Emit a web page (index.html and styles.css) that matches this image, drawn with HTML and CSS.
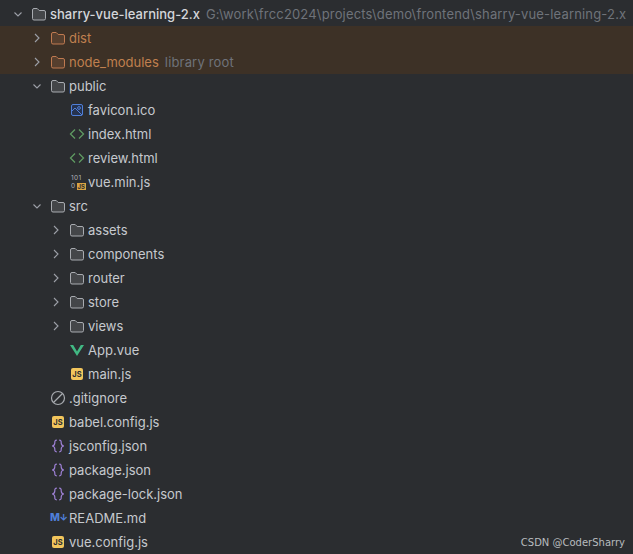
FILE: index.html
```html
<!DOCTYPE html>
<html lang="en">
<head>
<meta charset="utf-8">
<title>Project tree</title>
<link rel="stylesheet" href="styles.css">
</head>
<body>
<svg class="defs" width="0" height="0" aria-hidden="true">
  <symbol id="folder" viewBox="0 0 16 16"><path d="M1.5 4A1.5 1.5 0 0 1 3 2.5h3.2l2 2H13A1.5 1.5 0 0 1 14.5 6v6.5A1.5 1.5 0 0 1 13 14H3a1.5 1.5 0 0 1-1.5-1.5z" fill="currentColor" fill-opacity=".2" stroke="currentColor"/></symbol>
  <symbol id="open" viewBox="0 0 12 12"><path d="M2.500 4.500L6 8l3.500-3.500" fill="none" stroke="currentColor" stroke-width="1.100"/></symbol>
  <symbol id="closed" viewBox="0 0 12 12"><path d="M4 2l4 4-4 4" fill="none" stroke="currentColor" stroke-width="1.100"/></symbol>
  <symbol id="html" viewBox="0 0 16 16"><path d="M6 3.500L1.500 8 6 12.500M10 3.500L14.500 8 10 12.500" fill="none" stroke="#5f9a62" stroke-width="1.300"/></symbol>
  <symbol id="json" viewBox="0 0 16 16"><path d="M6.800 2.200C4.600 2.200 4.800 3.700 4.800 5c0 1.700-.6 2.600-2.600 3 2 .4 2.600 1.300 2.600 3 0 1.300-.2 2.800 2 2.800M9.200 2.200c2.200 0 2 1.500 2 2.800 0 1.700.6 2.600 2.600 3-2 .4-2.600 1.300-2.600 3 0 1.300.2 2.800-2 2.800" fill="none" stroke="#9d80d4" stroke-width="1.200"/></symbol>
</svg>

<main class="tree">
  <div class="row d0"><svg class="chev"><use href="#open"/></svg><svg class="icon"><use href="#folder"/></svg><span class="name strong">sharry-vue-learning-2.x</span><span class="hint">G:\work\frcc2024\projects\demo\frontend\sharry-vue-learning-2.x</span></div>
  <div class="row d1 excluded"><svg class="chev"><use href="#closed"/></svg><svg class="icon"><use href="#folder"/></svg><span class="name">dist</span></div>
  <div class="row d1 excluded"><svg class="chev"><use href="#closed"/></svg><svg class="icon"><use href="#folder"/></svg><span class="name">node_modules</span><span class="hint">library root</span></div>
  <div class="row d1"><svg class="chev"><use href="#open"/></svg><svg class="icon"><use href="#folder"/></svg><span class="name">public</span></div>
  <div class="row d2"><span class="chev"></span><svg class="icon" viewBox="0 0 16 16"><rect x="2.500" y="2.500" width="11" height="11" rx="1.500" fill="#26334f" stroke="#4f7fd8"/><circle cx="10" cy="6" r="1.400" fill="none" stroke="#4f7fd8"/><path d="M3 9l3-3 7 7" fill="none" stroke="#4f7fd8"/></svg><span class="name">favicon.ico</span></div>
  <div class="row d2"><span class="chev"></span><svg class="icon"><use href="#html"/></svg><span class="name">index.html</span></div>
  <div class="row d2"><span class="chev"></span><svg class="icon"><use href="#html"/></svg><span class="name">review.html</span></div>
  <div class="row d2"><span class="chev"></span><span class="icon minjs"><span class="bits">101</span><span class="bits-row"><span class="bits">0</span><span class="jsbadge">JS</span></span></span><span class="name">vue.min.js</span></div>
  <div class="row d1"><svg class="chev"><use href="#open"/></svg><svg class="icon"><use href="#folder"/></svg><span class="name">src</span></div>
  <div class="row d2"><svg class="chev"><use href="#closed"/></svg><svg class="icon"><use href="#folder"/></svg><span class="name">assets</span></div>
  <div class="row d2"><svg class="chev"><use href="#closed"/></svg><svg class="icon"><use href="#folder"/></svg><span class="name">components</span></div>
  <div class="row d2"><svg class="chev"><use href="#closed"/></svg><svg class="icon"><use href="#folder"/></svg><span class="name">router</span></div>
  <div class="row d2"><svg class="chev"><use href="#closed"/></svg><svg class="icon"><use href="#folder"/></svg><span class="name">store</span></div>
  <div class="row d2"><svg class="chev"><use href="#closed"/></svg><svg class="icon"><use href="#folder"/></svg><span class="name">views</span></div>
  <div class="row d2"><span class="chev"></span><svg class="icon" viewBox="0 0 16 16"><path d="M1 3h3.200L8 9.400 11.800 3H15L8 14z" fill="#41b883"/></svg><span class="name">App.vue</span></div>
  <div class="row d2"><span class="chev"></span><span class="icon jsicon"><span class="jstile">JS</span></span><span class="name">main.js</span></div>
  <div class="row d1"><span class="chev"></span><svg class="icon" viewBox="0 0 16 16"><circle cx="8" cy="8" r="6.500" fill="none" stroke="#a8abb0" stroke-width="1.200"/><path d="M3.500 12.500l9-9" stroke="#a8abb0" stroke-width="1.200"/></svg><span class="name">.gitignore</span></div>
  <div class="row d1"><span class="chev"></span><span class="icon jsicon"><span class="jstile">JS</span></span><span class="name">babel.config.js</span></div>
  <div class="row d1"><span class="chev"></span><svg class="icon"><use href="#json"/></svg><span class="name">jsconfig.json</span></div>
  <div class="row d1"><span class="chev"></span><svg class="icon"><use href="#json"/></svg><span class="name">package.json</span></div>
  <div class="row d1"><span class="chev"></span><svg class="icon"><use href="#json"/></svg><span class="name">package-lock.json</span></div>
  <div class="row d1"><span class="chev"></span><span class="icon md">M<span class="arrow">↓</span></span><span class="name">README.md</span></div>
  <div class="row d1"><span class="chev"></span><span class="icon jsicon"><span class="jstile">JS</span></span><span class="name">vue.config.js</span></div>
</main>
<div class="watermark">CSDN @CoderSharry</div>
</body>
</html>
```
FILE: styles.css
```css
html, body {
  margin: 0;
  height: 100%;
  overflow: hidden;
  background: #2b2d30;
}
.defs { position: absolute; }
.tree {
  padding-top: 2px;
  font: 13px/24px Inter, "Noto Sans", sans-serif;
  color: #c6c9ce;
}
.row {
  display: flex;
  align-items: center;
  height: 24px;
  white-space: nowrap;
  color: #b3b6bb;
}
.d0 { padding-left: 12px; }
.d1 { padding-left: 31px; }
.d2 { padding-left: 50px; }
.chev {
  flex: none;
  width: 12px;
  height: 12px;
  margin-right: 7px;
  color: #9da0a8;
}
.icon {
  flex: none;
  width: 16px;
  height: 16px;
  margin-right: 3px;
  color: #a8abb0;
}
.name { color: #c6c9ce; }
.strong { font-weight: 500; color: #d4d6da; }
.hint { margin-left: 6px; color: #6f737a; letter-spacing: 0.17px; }
.excluded { background: #3d3126; }
.excluded .name { color: #c0804f; }
.excluded .icon { color: #c07a50; }
.jsicon {
  display: flex;
  align-items: center;
  justify-content: center;
}
.jstile {
  width: 12px;
  height: 12px;
  border-radius: 2px;
  background: #f2c55c;
  color: #2b2d30;
  font-size: 7.500px;
  line-height: 13px;
  font-weight: 700;
  text-align: center;
}
.minjs {
  display: flex;
  flex-direction: column;
  padding-left: 2px;
  box-sizing: border-box;
  font-size: 6.500px;
  line-height: 8px;
  letter-spacing: 0.4px;
  color: #b0b3b8;
}
.bits-row { display: flex; gap: 1px; align-items: center; }
.jsbadge {
  background: #d9a343;
  color: #2b2d30;
  font-size: 6px;
  line-height: 7px;
  padding: 0 1px;
  font-weight: 700;
  letter-spacing: 0;
}
.md {
  font-size: 10.500px;
  line-height: 16px;
  font-weight: 800;
  color: #4f7fd8;
  letter-spacing: -0.5px;
}
.arrow { font-size: 9px; }
.watermark {
  position: absolute;
  right: 8px;
  bottom: 5px;
  font: 10px/13px "DejaVu Sans", sans-serif;
  color: #b8bbbf;
}
```
